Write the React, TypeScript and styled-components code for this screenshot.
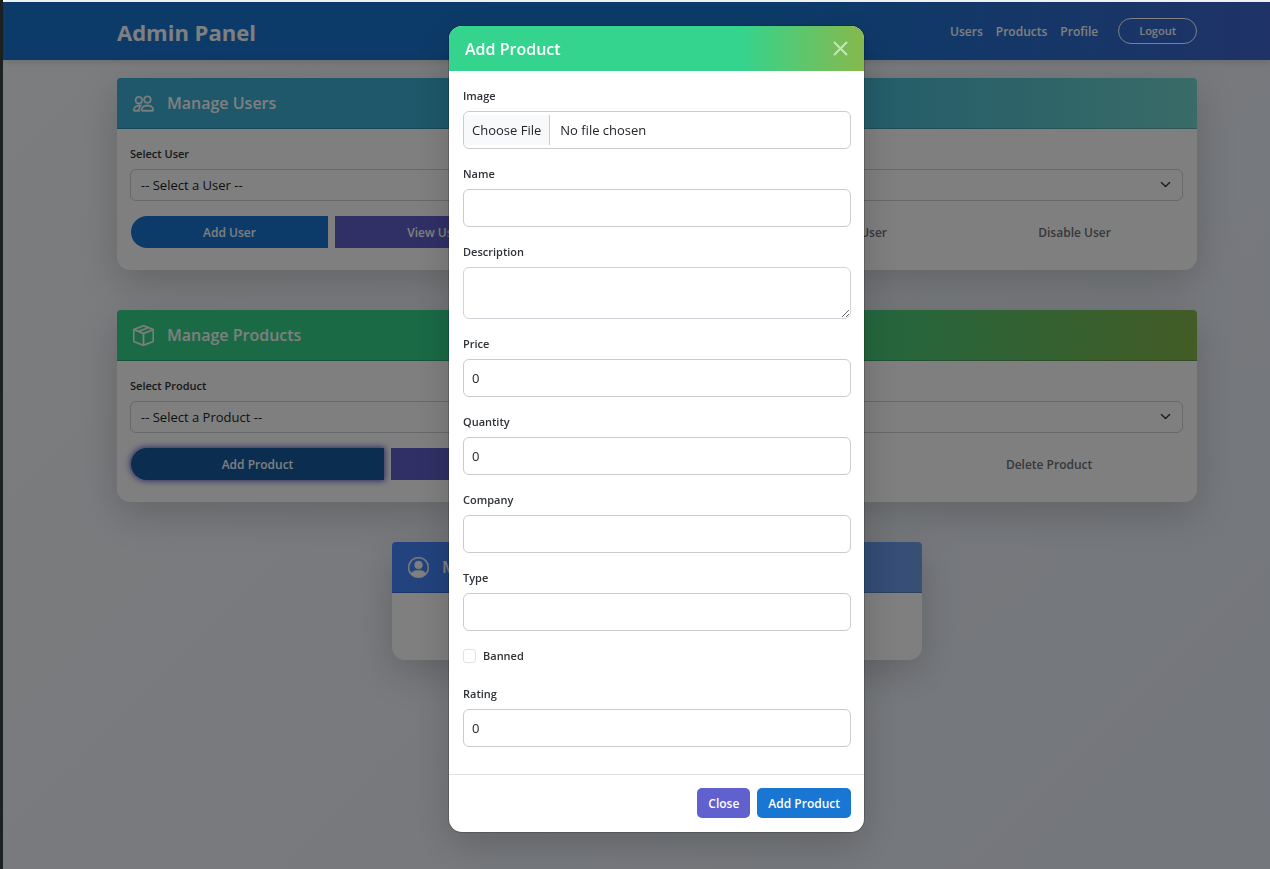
import React from "react";
import styled, { createGlobalStyle, css } from "styled-components";
import { BsBoxSeam, BsPeople, BsPersonCircle } from "react-icons/bs";

const GlobalStyle = createGlobalStyle`
  *, *::before, *::after { box-sizing: border-box; }
  body {
    margin: 0;
    font-family: "Segoe UI", "Open Sans", "Noto Sans", sans-serif;
    font-size: 13px;
    line-height: 20px;
    color: #212529;
    background: #1c2222;
  }
  button, input, select, textarea { font: inherit; color: inherit; }
`;

const Page = styled.div`
  min-height: 100vh;
  margin-left: 3px;
  border-top: 2px solid #f4f5f6;
  background: linear-gradient(135deg, #f8fafc 0%, #e8eef9 100%);
`;

const NavBar = styled.header`
  padding-left: 41px;
  background: linear-gradient(90deg, #1976d2 62%, #3e66d0 100%);
  box-shadow: 0 2px 6px rgba(0, 0, 0, 0.12);
`;

const Container = styled.div`
  width: 100%;
  max-width: 1080px;
  margin: 0 auto;
`;

const NavRow = styled(Container)`
  display: flex;
  align-items: center;
  height: 58px;
`;

const Brand = styled.a`
  flex: 1;
  padding-top: 2px;
  color: #fff;
  font-size: 22px;
  line-height: 32px;
  font-weight: 700;
  text-decoration: none;
`;

const NavLinks = styled.nav`
  display: flex;
  gap: 13px;
  margin-right: 20px;
  padding-top: 2px;
`;

const NavLink = styled.a`
  color: #fff;
  font-size: 12px;
  font-weight: 600;
  text-decoration: none;
`;

const LogoutButton = styled.button`
  height: 26px;
  padding: 0 20px;
  border: 1px solid #fff;
  border-radius: 13px;
  background: transparent;
  color: #fff;
  font-size: 11px;
  font-weight: 600;
  line-height: 20px;
`;

const Main = styled.main`
  display: flex;
  flex-direction: column;
  gap: 40px;
  padding: 18px 0 40px 41px;
`;

const Card = styled.section`
  border-radius: 4px 4px 13px 13px;
  background: #fff;
  box-shadow: 0 13px 38px rgba(0, 0, 0, 0.18);
`;

const CardHeader = styled.div<{ $from: string; $to: string }>`
  display: flex;
  align-items: center;
  gap: 13px;
  height: 51px;
  padding: 0 16px;
  border-bottom: 1px solid rgba(0, 0, 0, 0.18);
  border-radius: 4px 4px 0 0;
  background: linear-gradient(90deg, ${(p) => p.$from} 60%, ${(p) => p.$to} 100%) border-box;
  color: #fff;

  svg {
    stroke: currentColor;
    stroke-width: 0.3;
  }

  h2 {
    margin: 0;
    font-size: 16px;
    line-height: 24px;
    font-weight: 600;
  }
`;

const CardBody = styled.div`
  min-height: 67px;
  padding: 15px 14px 22px 13px;
`;

const Label = styled.label`
  display: block;
  margin-bottom: 5px;
  color: #2f3337;
  font-size: 11px;
  font-weight: 600;
  line-height: 20px;
`;

const SelectBox = styled.select`
  appearance: none;
  display: block;
  width: 100%;
  height: 32px;
  padding: 0 10px;
  border: 1px solid #ced0d4;
  border-radius: 6px;
  background: transparent;
`;

const SelectWrap = styled.div`
  position: relative;

  svg {
    position: absolute;
    right: 12px;
    top: 10px;
    pointer-events: none;
  }
`;

const ButtonRow = styled.div`
  display: flex;
  gap: 7px;
  margin-top: 15px;
  padding-left: 1px;
`;

type Tone = "primary" | "active" | "secondary" | "muted";

const tones = {
  primary: css`
    background: #1976d2;
    color: #fff;
  `,
  active: css`
    background: #145aa0;
    color: #fff;
    box-shadow: 0 0 6px 1px rgba(70, 70, 190, 0.9);
  `,
  secondary: css`
    background: #6060ce;
    color: #fff;
  `,
  muted: css`
    background: transparent;
    color: #6e7174;
  `,
};

const GroupButton = styled.button<{ $tone: Tone }>`
  flex: 1 1 auto;
  height: 32px;
  padding: 2px 10px 0;
  border: 0;
  font-size: 12px;
  font-weight: 600;
  ${(p) => tones[p.$tone]}

  &:first-child {
    border-radius: 16px 0 0 16px;
  }
`;

const Backdrop = styled.div`
  position: fixed;
  inset: 2px 0 0 3px;
  padding: 24px 0 24px 40px;
  background: rgba(0, 0, 0, 0.5);
  overflow: auto;
`;

const Dialog = styled.form`
  max-width: 415px;
  margin: 0 auto;
  border-radius: 13px;
  overflow: hidden;
  background: #fff;
  box-shadow: 0 0 0 1px rgba(0, 0, 0, 0.18), 0 13px 38px rgba(0, 0, 0, 0.18);
`;

const DialogHeader = styled.div`
  display: flex;
  align-items: center;
  justify-content: space-between;
  height: 45px;
  padding: 0 16px;
  background: linear-gradient(90deg, #34d48e 70%, #86b84c 100%);
  color: #fff;

  h1 {
    margin: 0;
    font-size: 16px;
    line-height: 24px;
    font-weight: 600;
  }
`;

const CloseIcon = styled.button`
  display: flex;
  padding: 0;
  border: 0;
  background: transparent;
  color: #fff;
  opacity: 0.6;
`;

const DialogBody = styled.div`
  padding: 15px 13px 27px 14px;
`;

const Field = styled.div`
  margin-bottom: 15px;

  &:last-child {
    margin-bottom: 0;
  }
`;

const control = css`
  display: block;
  width: 100%;
  border: 1px solid #c9cbce;
  border-radius: 6px;
  background: #fff;
`;

const TextInput = styled.input`
  ${control}
  height: 38px;
  padding: 0 8px;
`;

const FileInput = styled.input`
  ${control}
  height: 38px;
  padding: 3px 0;

  &::file-selector-button {
    height: 30px;
    margin: 0 10px 0 0;
    padding: 0 8px;
    border: 0;
    border-right: 1px solid #c9cbce;
    background: #f8f9fb;
    color: inherit;
    font: inherit;
  }
`;

const TextArea = styled.textarea`
  ${control}
  height: 52px;
  padding: 5px 8px;
  border-color: #d0d4da;
`;

const CheckRow = styled.div`
  display: flex;
  align-items: center;
  gap: 7px;
  margin-bottom: 18px;

  label {
    margin: 0;
  }
`;

const CheckBox = styled.input`
  appearance: none;
  width: 13px;
  height: 14px;
  margin: 0;
  border: 1px solid #dee2e6;
  border-radius: 3px;
  background: #fff;
`;

const DialogFooter = styled.div`
  display: flex;
  justify-content: flex-end;
  gap: 7px;
  padding: 13px 13px 14px;
  border-top: 1px solid #dee2e6;
`;

const FooterButton = styled.button<{ $tone: Tone }>`
  height: 30px;
  padding: 2px 11px 0;
  border: 0;
  border-radius: 5px;
  font-size: 12px;
  font-weight: 600;
  ${(p) => tones[p.$tone]}
`;

const Narrow = styled.div`
  width: 100%;
  max-width: 530px;
  margin: 0 auto;
`;

function Chevron() {
  return (
    <svg width="11" height="11" viewBox="0 0 16 16" fill="none" stroke="#343a40" strokeWidth="2" strokeLinecap="round" strokeLinejoin="round" aria-hidden="true">
      <path d="m2 5 6 6 6-6" />
    </svg>
  );
}

type Action = { text: string; tone: Tone };

function SelectCard(props: {
  id: string;
  title: string;
  icon: React.ReactNode;
  from: string;
  to: string;
  label: string;
  placeholder: string;
  actions: Action[];
}) {
  return (
    <Container>
      <Card>
        <CardHeader $from={props.from} $to={props.to}>
          {props.icon}
          <h2>{props.title}</h2>
        </CardHeader>
        <CardBody>
          <Label htmlFor={props.id}>{props.label}</Label>
          <SelectWrap>
            <SelectBox id={props.id}>
              <option>{props.placeholder}</option>
            </SelectBox>
            <Chevron />
          </SelectWrap>
          <ButtonRow>
            {props.actions.map((a) => (
              <GroupButton key={a.text} type="button" $tone={a.tone} disabled={a.tone === "muted"}>
                {a.text}
              </GroupButton>
            ))}
          </ButtonRow>
        </CardBody>
      </Card>
    </Container>
  );
}

function InputField({ id, label, number }: { id: string; label: string; number?: boolean }) {
  return (
    <Field>
      <Label htmlFor={id}>{label}</Label>
      <TextInput id={id} type={number ? "number" : "text"} defaultValue={number ? 0 : ""} />
    </Field>
  );
}

export default function App() {
  return (
    <>
      <GlobalStyle />
      <Page>
        <NavBar>
          <NavRow>
            <Brand href="#">Admin Panel</Brand>
            <NavLinks>
              <NavLink href="#users">Users</NavLink>
              <NavLink href="#products">Products</NavLink>
              <NavLink href="#profile">Profile</NavLink>
            </NavLinks>
            <LogoutButton type="button">Logout</LogoutButton>
          </NavRow>
        </NavBar>
        <Main>
          <SelectCard
            id="user"
            title="Manage Users"
            icon={<BsPeople size={21} />}
            from="#3cb0d4"
            to="#72d8d0"
            label="Select User"
            placeholder="-- Select a User --"
            actions={[
              { text: "Add User", tone: "primary" },
              { text: "View User", tone: "secondary" },
              { text: "Edit User", tone: "muted" },
              { text: "Delete User", tone: "muted" },
              { text: "Disable User", tone: "muted" },
            ]}
          />
          <SelectCard
            id="product"
            title="Manage Products"
            icon={<BsBoxSeam size={21} />}
            from="#34d48c"
            to="#86b84c"
            label="Select Product"
            placeholder="-- Select a Product --"
            actions={[
              { text: "Add Product", tone: "active" },
              { text: "View Product", tone: "secondary" },
              { text: "Edit Product", tone: "muted" },
              { text: "Delete Product", tone: "muted" },
            ]}
          />
          <Narrow>
            <Card>
              <CardHeader $from="#4486fa" $to="#72a0e8">
                <BsPersonCircle size={21} />
                <h2>My Profile</h2>
              </CardHeader>
              <CardBody />
            </Card>
          </Narrow>
        </Main>
      </Page>
      <Backdrop>
        <Dialog role="dialog" aria-labelledby="dialog-title">
          <DialogHeader>
            <h1 id="dialog-title">Add Product</h1>
            <CloseIcon type="button" aria-label="Close">
              <svg width="15" height="15" viewBox="0 0 15 15" stroke="currentColor" strokeWidth="2" strokeLinecap="round" aria-hidden="true">
                <path d="M1.5 1.5l12 12M13.5 1.5l-12 12" />
              </svg>
            </CloseIcon>
          </DialogHeader>
          <DialogBody>
            <Field>
              <Label htmlFor="image">Image</Label>
              <FileInput id="image" type="file" />
            </Field>
            <InputField id="name" label="Name" />
            <Field>
              <Label htmlFor="description">Description</Label>
              <TextArea id="description" />
            </Field>
            <InputField id="price" label="Price" number />
            <InputField id="quantity" label="Quantity" number />
            <InputField id="company" label="Company" />
            <InputField id="type" label="Type" />
            <CheckRow>
              <CheckBox id="banned" type="checkbox" />
              <Label htmlFor="banned">Banned</Label>
            </CheckRow>
            <InputField id="rating" label="Rating" number />
          </DialogBody>
          <DialogFooter>
            <FooterButton type="button" $tone="secondary">Close</FooterButton>
            <FooterButton type="submit" $tone="primary">Add Product</FooterButton>
          </DialogFooter>
        </Dialog>
      </Backdrop>
    </>
  );
}
